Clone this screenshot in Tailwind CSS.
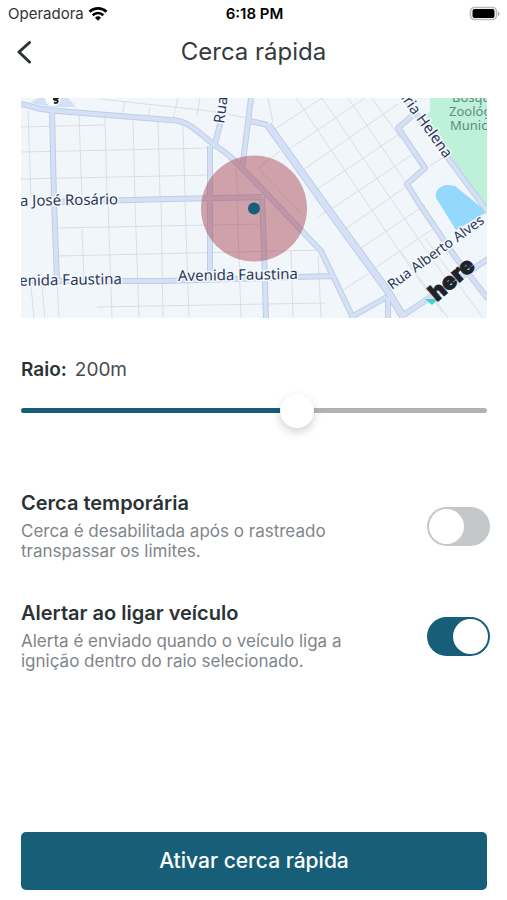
<!DOCTYPE html>
<html lang="pt-BR">
<head>
  <meta charset="UTF-8" />
  <meta name="viewport" content="width=device-width, initial-scale=1.0"/>
  <title>Cerca rápida</title>
  <script src="https://cdn.jsdelivr.net/npm/@tailwindcss/browser@4"></script>
</head>
<body class="min-h-screen flex flex-col bg-white text-[#2b3236] font-['Inter',sans-serif]">

  <!-- Status bar -->
  <div class="grid grid-cols-3 items-center h-7 pl-2 pr-1.5 text-[15px] text-black">
    <div class="flex items-center gap-1">
      <span class="text-[#333]">Operadora</span>
      <svg class="w-5 h-4" viewBox="0 0 20 16" fill="none" stroke="#000" stroke-width="2.6">
        <path d="M1.5 5.8a12.3 12.3 0 0 1 17 0"/>
        <path d="M4.7 9.2a7.6 7.6 0 0 1 10.6 0"/>
        <path d="M10 14.8l-3-3a4.3 4.3 0 0 1 6 0z" fill="#000" stroke="none"/>
      </svg>
    </div>
    <span class="text-center font-semibold">6:18 PM</span>
    <svg class="w-8 h-4 justify-self-end" viewBox="0 0 32 16">
      <rect x="1.5" y="1.5" width="26" height="12" rx="4" fill="#fff" stroke="#bbb" stroke-width="1.6"/>
      <rect x="3.5" y="3" width="22" height="9" rx="2" fill="#000"/>
      <path d="M29 5.500c2 .8 2 3.800 0 4.500z" fill="#aaa"/>
    </svg>
  </div>

  <!-- Header -->
  <header class="grid grid-cols-[40px_1fr_40px] items-center h-12 px-2">
    <button type="button" aria-label="Voltar" class="flex items-center justify-center w-8 h-10">
      <svg class="w-4 h-6" viewBox="0 0 16 24" fill="none" stroke="#2b3236" stroke-width="3" stroke-linecap="round" stroke-linejoin="round">
        <path d="M13.500 2.500L3 12l10.500 10"/>
      </svg>
    </button>
    <h1 class="text-center text-2xl text-[#343b40]">Cerca rápida</h1>
  </header>

  <main class="flex-1 pl-[21px] pr-5 pt-[22px]">

    <!-- Map -->
    <svg class="block w-full" viewBox="21 98 466 220" role="img" aria-label="Mapa">
      <rect x="21" y="98" width="466" height="220" fill="#f1f6fb"/>

      <!-- Park and lake -->
      <path d="M430 98h58v114l-38-52-25-40 5-10z" fill="#bdf1d9"/>
      <path d="M436 198c-2-7 5-14 13-13l6 1 32 26-31 18z" fill="#94d8fd"/>

      <!-- Side streets -->
      <g fill="none" stroke="#d9dfe3" stroke-width="1">
        <path d="M28 111l3 87M79 115l3 85M105 117l2 80M133 120l2 79M158 120l2 78M183 126l2 70"/>
        <path d="M21 127l84-2M21 152l190-4M21 179l190-4M58 228l204-4M58 256l266-6M97 307l228-4"/>
        <path d="M108 203l4 115M135 202l4 116M161 200l2 118M185 200l4 118M237 197l4 121M291 250l2 68M318 255l3 63"/>
        <path d="M82 229l2 50M31 286l3 32M42 286l3 32M57 282l2 36M236 168l2 30"/>
        <path d="M100 99l110 12 38 7M125 101l-3 15M150 107l-2 11M178 98l-5 20M200 98l-3 18"/>
        <path d="M258 168l42 44M258 168l22-17M296 98l112 166M322 98l130 190M348 98l92 134M372 98l28 40M268 98l5 25"/>
        <path d="M272 131l50-33M285 152l80-54M300 172l98-68M313 192l92-62M327 212l86-58M341 232l72-50M355 252l70-47M369 272l68-46M318 217l14-10"/>
        <path d="M430 166l18-12M408 264l34 48M425 238l58 80M400 250l48 68M340 292l28-18"/>
      </g>

      <!-- Main roads: edge, then surface -->
      <g fill="none" stroke-linejoin="round">
        <g stroke="#c0cde4" stroke-width="6">
          <path d="M21 104l20 5 17 2 112 9c18 0 27 11 44 25 18 10 31 27 49 45l58 61 13 27 20 42M52 111l2 89 3 82M21 281h144l168-5M54 202l116-3 92-2M210 146v130M262 197l2 53 2 68M221 120l-6 24M251 98l-9 72M250 121l18 4M353 316l34-19M388 298v20M402 316l86-57M412 116l-14 12 27 40-18 16 13 21 36 53 32 41M405 98l43 60 40 54"/>
          <path d="M268 125l57 80 62 85 17 28" stroke-width="8"/>
        </g>
        <g stroke="#d3e0f6" stroke-width="4">
          <path d="M21 104l20 5 17 2 112 9c18 0 27 11 44 25 18 10 31 27 49 45l58 61 13 27 20 42M52 111l2 89 3 82M21 281h144l168-5M54 202l116-3 92-2M210 146v130M262 197l2 53 2 68M221 120l-6 24M251 98l-9 72M250 121l18 4M353 316l34-19M388 298v20M402 316l86-57M412 116l-14 12 27 40-18 16 13 21 36 53 32 41M405 98l43 60 40 54"/>
          <path d="M268 125l57 80 62 85 17 28" stroke-width="6"/>
        </g>
      </g>
      <path d="M38 98h30l8 9H52l-22-4z" fill="#d3e0f6"/>
      <circle cx="53" cy="98" r="8" fill="#fff"/>
      <path d="M53 99h4l-1 1c3 0 2 4-2 2.500" fill="none" stroke="#222" stroke-width="2"/>

      <!-- Geofence -->
      <circle cx="254" cy="208.500" r="53" fill="#a94452" fill-opacity=".48"/>
      <circle cx="254" cy="208.500" r="6" fill="#175e78"/>

      <!-- Street names -->
      <g class="font-['Noto_Sans',sans-serif]" font-size="15" fill="#2a3856" stroke="#f5f9fd" stroke-width="3" stroke-linejoin="round" paint-order="stroke">
        <text x="20" y="206" transform="rotate(-1 20 206)">a José Rosário</text>
        <text x="122" y="284" text-anchor="end" transform="rotate(-1 122 284)">enida Faustina</text>
        <text x="178" y="281" transform="rotate(-1 178 281)">Avenida Faustina</text>
        <text x="224" y="124" transform="rotate(-82 224 124)">Rua</text>
        <text x="445" y="159" text-anchor="end" transform="rotate(54 445 159)">Maria Helena</text>
        <text x="392" y="290" font-size="14" transform="rotate(-36 392 290)">Rua Alberto Alves</text>
      </g>
      <g class="font-['Noto_Sans',sans-serif]" font-size="13" fill="#5f8c80">
        <text x="452" y="102">Bosque</text>
        <text x="449" y="116">Zoológico</text>
        <text x="450" y="130">Municipal</text>
      </g>

      <!-- Map provider -->
      <path d="M425 299h13l-6 6z" fill="#3fd6c9"/>
      <text x="437" y="302" transform="rotate(-41 437 302)" class="font-['Inter',sans-serif]" font-size="23" font-weight="900" fill="#1e222b" stroke="#1e222b" stroke-width="1">here</text>
    </svg>

    <!-- Radius -->
    <section class="pt-10">
      <label for="raio" class="flex gap-2 text-[19px] leading-6"><span class="font-semibold">Raio:</span> <span id="raio-value" class="text-[#454c50]">200m</span></label>
      <input id="raio" type="range" min="50" max="300" value="200"
        style="background-size: 60% 100%"
        class="block w-full h-[5px] mt-[26px] rounded-full appearance-none bg-[#b0b3b5] bg-linear-to-r from-[#175e78] to-[#175e78] bg-no-repeat [&::-webkit-slider-thumb]:appearance-none [&::-webkit-slider-thumb]:size-[34px] [&::-webkit-slider-thumb]:rounded-full [&::-webkit-slider-thumb]:bg-white [&::-webkit-slider-thumb]:shadow-[0_4px_10px_rgba(0,0,0,0.18)]">
    </section>

    <!-- Options -->
    <section class="flex flex-col gap-10 pt-[78px] -mr-[3px]">
      <div class="flex items-center justify-between">
        <label for="temporaria" class="w-[340px]">
          <span class="block text-[20px] leading-6 font-semibold">Cerca temporária</span>
          <span class="block mt-1.5 text-[17px] leading-5 text-[#7f8589]">Cerca é desabilitada após o rastreado transpassar os limites.</span>
        </label>
        <input id="temporaria" type="checkbox" role="switch" class="relative shrink-0 w-[63px] h-[39px] rounded-full appearance-none bg-[#c5c8ca] checked:bg-[#175e78] before:absolute before:top-0.5 before:left-0.5 before:size-[35px] before:rounded-full before:bg-white checked:before:left-[26px]">
      </div>
      <div class="flex items-center justify-between">
        <label for="alertar" class="w-[340px]">
          <span class="block text-[20px] leading-6 font-semibold">Alertar ao ligar veículo</span>
          <span class="block mt-1.5 text-[17px] leading-5 text-[#7f8589]">Alerta é enviado quando o veículo liga a ignição dentro do raio selecionado.</span>
        </label>
        <input id="alertar" type="checkbox" role="switch" checked class="relative shrink-0 w-[63px] h-[39px] rounded-full appearance-none bg-[#c5c8ca] checked:bg-[#175e78] before:absolute before:top-0.5 before:left-0.5 before:size-[35px] before:rounded-full before:bg-white checked:before:left-[26px]">
      </div>
    </section>
  </main>

  <footer class="pl-[21px] pr-5 pb-2.5">
    <button type="button" class="w-full h-[58px] rounded-[5px] bg-[#175e78] text-white text-[21px] font-medium">Ativar cerca rápida</button>
  </footer>

  <script>
    const raio = document.getElementById('raio');
    raio.addEventListener('input', () => {
      document.getElementById('raio-value').textContent = raio.value + 'm';
      raio.style.backgroundSize = (raio.value - raio.min) / (raio.max - raio.min) * 100 + '% 100%';
    });
  </script>
</body>
</html>
